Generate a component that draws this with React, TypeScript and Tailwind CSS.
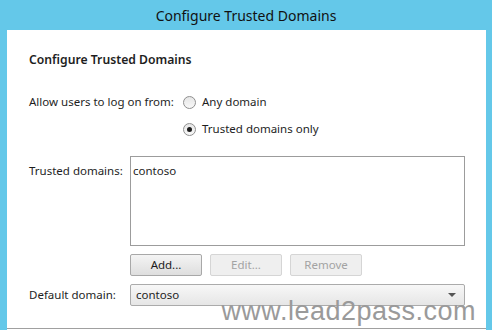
import React from 'react';

const font = { fontFamily: '"Noto Sans", "Open Sans", sans-serif' };

function Radio({ checked, label }: { checked?: boolean; label: string }) {
  return (
    <div className="flex items-center gap-[6px] h-[20px]">
      <span className="w-[13px] h-[13px] rounded-full border border-[#8f8f8f] bg-gradient-to-b from-[#e6e6e6] to-[#f8f8f8] flex items-center justify-center">
        {checked && <span className="w-[5px] h-[5px] rounded-full bg-[#1c1c1c]" />}
      </span>
      <span>{label}</span>
    </div>
  );
}

function Btn({ label, disabled }: { label: string; disabled?: boolean }) {
  return (
    <button
      className={
        disabled
          ? 'w-[72px] h-[22px] border border-[#d5d5d5] bg-[#efefef] text-[#a3a3a3] rounded-[2px]'
          : 'w-[72px] h-[22px] border border-[#a8a8a8] bg-gradient-to-b from-[#f4f4f4] to-[#dedede] text-[#1c1c1c] rounded-[2px]'
      }
    >
      {label}
    </button>
  );
}

export default function App() {
  return (
    <div className="w-[492px] h-[330px] bg-[#64c8e9] overflow-hidden text-[#1e1e1e] text-[11.5px]" style={font}>
      <div className="h-[30px] flex items-center justify-center text-[14px] text-[#111]">
        Configure Trusted Domains
      </div>
      <div className="relative mx-[7px] w-[479px] h-[300px] bg-white pl-[22px] pr-[18px] pt-[22px]">
        <div className="text-[12.2px] font-semibold leading-[16px]">Configure Trusted Domains</div>

        <div className="flex mt-[24px]">
          <div className="w-[154px] h-[20px] flex items-center">Allow users to log on from:</div>
          <div className="flex flex-col gap-[7px]">
            <Radio label="Any domain" />
            <Radio checked label="Trusted domains only" />
          </div>
        </div>

        <div className="flex mt-[17px]">
          <div className="w-[101px] pt-[6px]">Trusted domains:</div>
          <div className="w-[335px] h-[90px] border border-[#9c9c9c] px-[2px] pt-[5px]">contoso</div>
        </div>

        <div className="flex gap-[8px] ml-[101px] mt-[8px]">
          <Btn label="Add..." />
          <Btn label="Edit..." disabled />
          <Btn label="Remove" disabled />
        </div>

        <div className="flex items-center mt-[8px]">
          <div className="w-[101px]">Default domain:</div>
          <div className="w-[335px] h-[22px] border border-[#ababab] rounded-[2px] bg-gradient-to-b from-[#f7f7f7] to-[#e6e6e6] flex items-center justify-between pl-[5px] pr-[8px]">
            <span>contoso</span>
            <svg width="8" height="4" viewBox="0 0 8 4">
              <path d="M0 0 L8 0 L4 4 Z" fill="#555" />
            </svg>
          </div>
        </div>

        <div
          className="absolute right-[10px] bottom-[4px] text-[27px] leading-[30px] text-[#9a9a9a] tracking-[0.5px]"
          style={{ fontFamily: '"Liberation Sans", Arial, sans-serif' }}
        >
          www.lead2pass.com
        </div>
        <div className="absolute left-0 right-0 bottom-[1px] h-px bg-[#a0a0a0]" />
      </div>
    </div>
  );
}
